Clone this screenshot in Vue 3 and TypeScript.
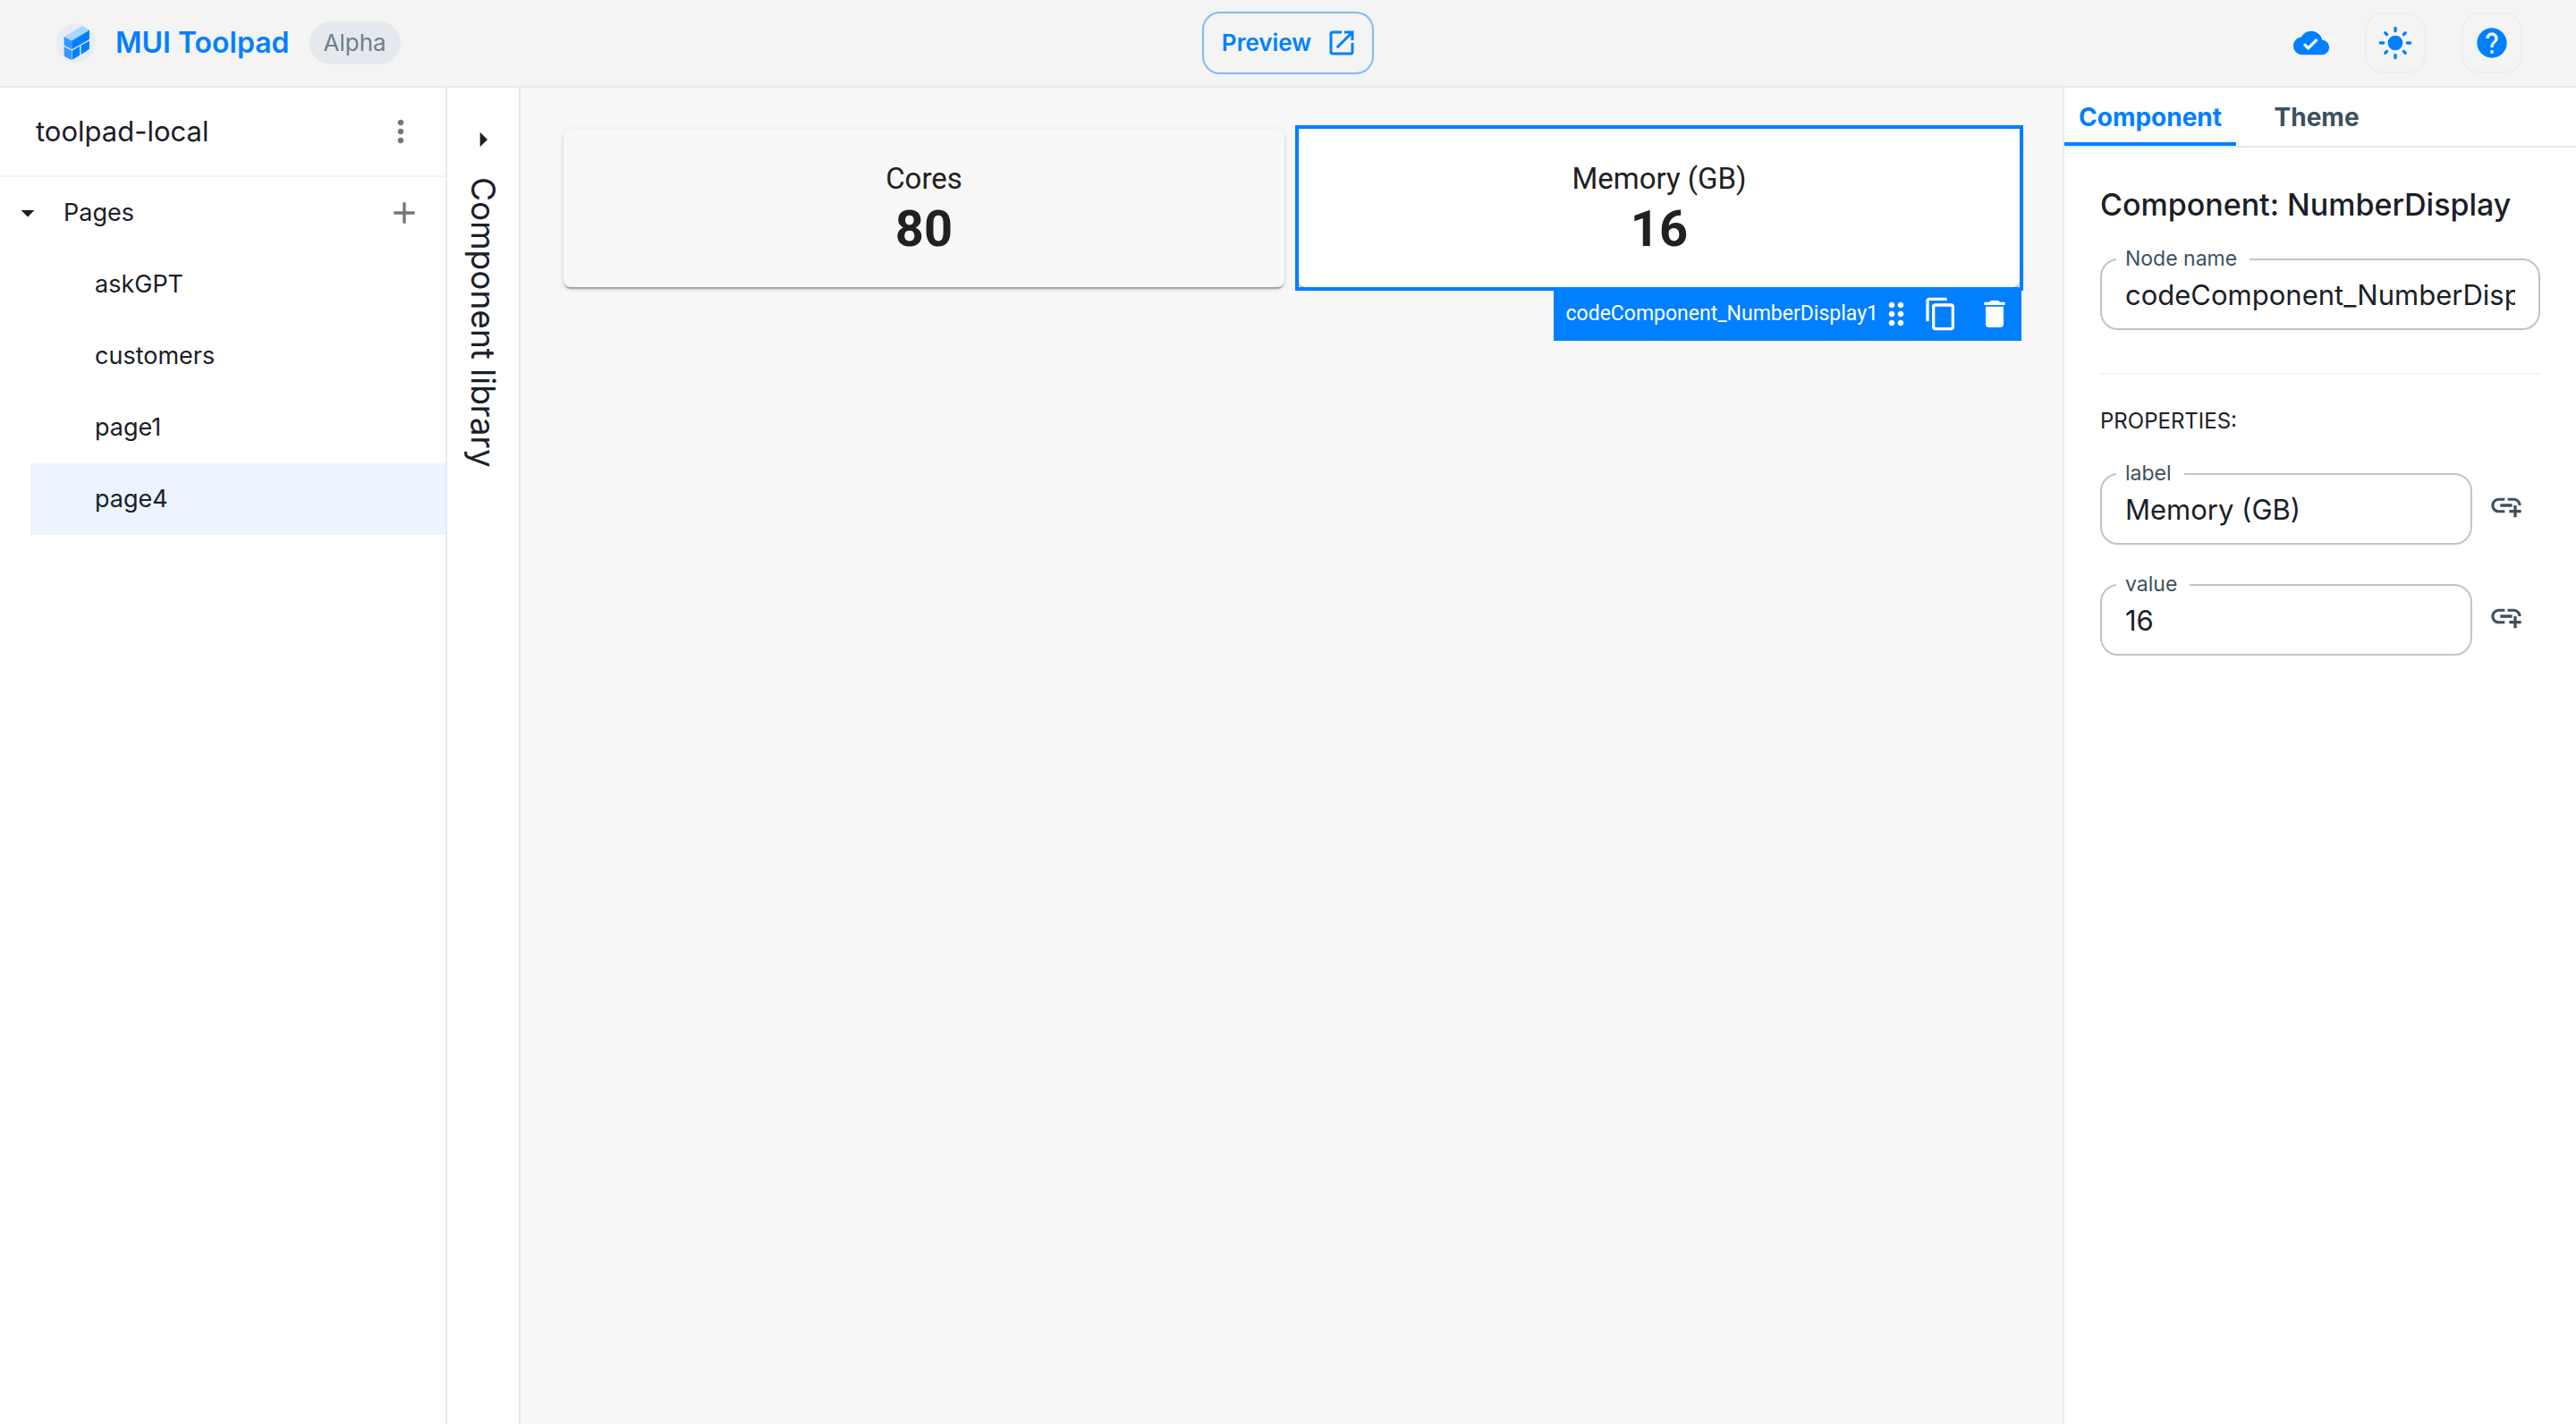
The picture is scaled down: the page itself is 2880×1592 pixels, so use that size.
<script setup lang="ts">
import { ref } from 'vue'

interface DisplayCard {
  label: string
  value: string
  node: string
}

interface Property {
  name: string
  value: string
}

const pages: string[] = ['askGPT', 'customers', 'page1', 'page4']
const currentPage = ref('page4')
const nodeName = ref('codeComponent_NumberDisplay1')
const selectedNode = 'codeComponent_NumberDisplay1'

const cards: DisplayCard[] = [
  { label: 'Cores', value: '80', node: 'codeComponent_NumberDisplay' },
  { label: 'Memory (GB)', value: '16', node: 'codeComponent_NumberDisplay1' },
]

const properties = ref<Property[]>([
  { name: 'label', value: 'Memory (GB)' },
  { name: 'value', value: '16' },
])
</script>

<template>
  <div class="app">
    <header class="topbar">
      <div class="brand">
        <svg class="logo" viewBox="0 0 44 44" aria-hidden="true">
          <circle cx="22" cy="22" r="22" fill="#E9EDF3" />
          <path fill="#A5D8FF" d="M9 15 28 3.6q1-.6 2 0L37 7.6 17.3 19.6z" />
          <path fill="#3399FF" d="M8.6 15l8.7 4.6v9.6l-7.6-3.9q-1.100-.6-1.100-1.800z" />
          <path fill="#007FFF" d="M17.3 19.600 37 7.800v9q0 1.100-1 1.700l-18.700 10.700z" />
          <path fill="#3399FF" d="M8.600 26l8.700 4.600v10.600l-7.700-4q-1-.5-1-1.600z" />
          <path fill="#007FFF" d="M17.900 30.400l8.300-4.800v10.200l-8.300 5z" />
          <path fill="#007FFF" d="M27.600 24.800 37 19.400v8.500q0 1-.9 1.600l-8.500 5.500z" />
        </svg>
        <a class="brand-name" href="#">MUI Toolpad</a>
        <span class="chip">Alpha</span>
      </div>

      <button class="preview" type="button">
        <span>Preview</span>
        <svg class="icon-md" viewBox="0 0 24 24" aria-hidden="true">
          <path d="M19 19H5V5h7V3H5c-1.110 0-2 .9-2 2v14c0 1.100.89 2 2 2h14c1.100 0 2-.9 2-2v-7h-2v7zM14 3v2h3.590l-9.830 9.830 1.410 1.410L19 6.410V10h2V3h-7z" />
        </svg>
      </button>

      <div class="actions">
        <svg class="icon" viewBox="0 0 24 24" role="img" aria-label="All changes saved">
          <path d="M19.350 10.040C18.670 6.590 15.640 4 12 4 9.110 4 6.600 5.640 5.350 8.040 2.340 8.360 0 10.910 0 14c0 3.310 2.690 6 6 6h13c2.760 0 5-2.240 5-5 0-2.640-2.050-4.780-4.650-4.960zM10 17l-3.500-3.500 1.410-1.410L10 14.170 15.180 9l1.410 1.410L10 17z" />
        </svg>
        <button class="square" type="button" aria-label="Toggle theme">
          <svg class="icon" viewBox="0 0 24 24" aria-hidden="true">
            <circle cx="12" cy="12" r="5" />
            <path class="rays" d="M12 2v2M12 20v2M2 12h2M20 12h2M5.280 5.280l1.070 1.070M17.650 17.650l1.070 1.070M5.280 18.720l1.070-1.070M17.650 6.350l1.070-1.070" />
          </svg>
        </button>
        <button class="square" type="button" aria-label="Help">
          <svg class="icon" viewBox="0 0 24 24" aria-hidden="true">
            <path d="M12 2C6.480 2 2 6.480 2 12s4.480 10 10 10 10-4.480 10-10S17.520 2 12 2zm1 17h-2v-2h2v2zm2.070-7.750l-.9.920C13.450 12.900 13 13.500 13 15h-2v-.5c0-1.100.45-2.100 1.170-2.830l1.240-1.260c.37-.36.590-.86.590-1.410 0-1.100-.9-2-2-2s-2 .9-2 2H8c0-2.210 1.790-4 4-4s4 1.790 4 4c0 .88-.36 1.680-.93 2.250z" />
          </svg>
        </button>
      </div>
    </header>

    <div class="workspace">
      <nav class="explorer" aria-label="App explorer">
        <div class="app-row">
          <span class="app-name">toolpad-local</span>
          <button class="ghost" type="button" aria-label="App menu">
            <svg class="icon" viewBox="0 0 24 24" aria-hidden="true">
              <path d="M12 8c1.100 0 2-.9 2-2s-.9-2-2-2-2 .9-2 2 .9 2 2 2zm0 2c-1.100 0-2 .9-2 2s.9 2 2 2 2-.9 2-2-.9-2-2-2zm0 6c-1.100 0-2 .9-2 2s.9 2 2 2 2-.9 2-2-.9-2-2-2z" />
            </svg>
          </button>
        </div>
        <div class="group-row">
          <button class="group-toggle" type="button" aria-expanded="true">
            <svg class="icon-md" viewBox="0 0 24 24" aria-hidden="true"><path d="m7 10 5 5 5-5z" /></svg>
            <span>Pages</span>
          </button>
          <button class="ghost" type="button" aria-label="Create page">
            <svg class="icon" viewBox="0 0 24 24" aria-hidden="true"><path d="M19 13h-6v6h-2v-6H5v-2h6V5h2v6h6v2z" /></svg>
          </button>
        </div>
        <ul class="pages">
          <li v-for="page in pages" :key="page">
            <a
              :href="'#' + page"
              :class="{ current: page === currentPage }"
              @click="currentPage = page"
            >{{ page }}</a>
          </li>
        </ul>
      </nav>

      <aside class="library">
        <button class="library-toggle" type="button" aria-label="Open component library">
          <svg class="icon" viewBox="0 0 24 24" aria-hidden="true"><path d="m10 17 5-5-5-5z" /></svg>
        </button>
        <span class="library-title">Component library</span>
      </aside>

      <main class="canvas">
        <article
          v-for="card in cards"
          :key="card.node"
          class="card"
          :class="{ selected: card.node === selectedNode }"
        >
          <p class="card-label">{{ card.label }}</p>
          <p class="card-value">{{ card.value }}</p>
          <div v-if="card.node === selectedNode" class="node-bar">
            <span>{{ card.node }}</span>
            <svg class="icon" viewBox="0 0 24 24" aria-hidden="true">
              <path d="M11 18c0 1.100-.9 2-2 2s-2-.9-2-2 .9-2 2-2 2 .9 2 2zm-2-8c-1.100 0-2 .9-2 2s.9 2 2 2 2-.9 2-2-.9-2-2-2zm0-6c-1.100 0-2 .9-2 2s.9 2 2 2 2-.9 2-2-.9-2-2-2zm6 4c1.100 0 2-.9 2-2s-.9-2-2-2-2 .9-2 2 .9 2 2 2zm0 2c-1.100 0-2 .9-2 2s.9 2 2 2 2-.9 2-2-.9-2-2-2zm0 6c-1.100 0-2 .9-2 2s.9 2 2 2 2-.9 2-2-.9-2-2-2z" />
            </svg>
            <button type="button" aria-label="Duplicate">
              <svg class="icon" viewBox="0 0 24 24" aria-hidden="true">
                <path d="M16 1H4c-1.100 0-2 .9-2 2v14h2V3h12V1zm3 4H8c-1.100 0-2 .9-2 2v14c0 1.100.9 2 2 2h11c1.100 0 2-.9 2-2V7c0-1.100-.9-2-2-2zm0 16H8V7h11v14z" />
              </svg>
            </button>
            <button type="button" aria-label="Delete">
              <svg class="icon" viewBox="0 0 24 24" aria-hidden="true">
                <path d="M6 19c0 1.100.9 2 2 2h8c1.100 0 2-.9 2-2V7H6v12zM19 4h-3.500l-1-1h-5l-1 1H5v2h14V4z" />
              </svg>
            </button>
          </div>
        </article>
      </main>

      <aside class="inspector">
        <div class="tabs" role="tablist">
          <button class="tab active" type="button" role="tab" aria-selected="true">Component</button>
          <button class="tab" type="button" role="tab" aria-selected="false">Theme</button>
        </div>
        <div class="panel" role="tabpanel">
          <h2 class="panel-title">Component: NumberDisplay</h2>
          <div class="field">
            <label for="node-name">Node name</label>
            <input id="node-name" v-model="nodeName" type="text" />
          </div>
          <hr class="rule" />
          <h3 class="overline">PROPERTIES:</h3>
          <div v-for="prop in properties" :key="prop.name" class="prop">
            <div class="field">
              <label :for="'prop-' + prop.name">{{ prop.name }}</label>
              <input :id="'prop-' + prop.name" v-model="prop.value" type="text" />
            </div>
            <button class="bind" type="button" :aria-label="'Bind ' + prop.name">
              <svg class="icon" viewBox="0 0 24 24" aria-hidden="true">
                <path d="M8 11h8v2H8v-2zm12.100 1H22c0-2.760-2.240-5-5-5h-4v1.900h4c1.710 0 3.100 1.390 3.100 3.100zM3.900 12c0-1.710 1.390-3.100 3.100-3.100h4V7H7c-2.760 0-5 2.240-5 5s2.240 5 5 5h4v-1.900H7c-1.710 0-3.100-1.390-3.100-3.100zM19 12h-2v3h-3v2h3v3h2v-3h3v-2h-3v-3z" />
              </svg>
            </button>
          </div>
        </div>
      </aside>
    </div>
  </div>
</template>

<style>
body {
  margin: 0;
}
</style>

<style scoped>
.app {
  display: flex;
  flex-direction: column;
  min-height: 100vh;
  background: #f7f7f7;
  color: #1a2027;
  font-family: Inter, 'Liberation Sans', sans-serif;
  font-size: 27px;
  line-height: 40px;
}

*,
*::before,
*::after {
  box-sizing: border-box;
}

button {
  display: flex;
  align-items: center;
  justify-content: center;
  padding: 0;
  border: 0;
  background: none;
  color: inherit;
  font: inherit;
  cursor: pointer;
}

a {
  color: inherit;
  text-decoration: none;
}

.icon,
.icon-md {
  display: block;
  flex: none;
  width: 40px;
  height: 40px;
  fill: currentColor;
}

.icon-md {
  width: 36px;
  height: 36px;
}

.rays {
  fill: none;
  stroke: currentColor;
  stroke-width: 2;
  stroke-linecap: round;
}

/* Top bar */
.topbar {
  display: grid;
  grid-template-columns: 1fr auto 1fr;
  align-items: center;
  height: 98px;
  padding: 0 60px;
  border-bottom: 2px solid #e5eaef;
  background: #f4f4f4;
  color: #007fff;
}

.brand {
  display: flex;
  align-items: center;
  padding-left: 3px;
}

.logo {
  width: 44px;
  height: 44px;
}

.brand-name {
  margin: 0 22px;
  font-size: 32px;
  font-weight: 600;
}

.chip {
  padding: 0 16px;
  border-radius: 24px;
  background: #e5e9ee;
  color: #6f7e8c;
  font-size: 26px;
  line-height: 48px;
}

.preview {
  gap: 16px;
  height: 70px;
  padding: 0 16px 0 20px;
  border: 2px solid #84b9fa;
  border-radius: 20px;
  font-size: 26px;
  font-weight: 600;
}

.actions {
  display: flex;
  align-items: center;
  justify-content: flex-end;
  gap: 40px;
}

.square {
  width: 68px;
  height: 68px;
  border: 2px solid #eeeeee;
  border-radius: 20px;
}

/* Main columns */
.workspace {
  display: flex;
  flex: 1;
}

.explorer {
  flex: none;
  width: 500px;
  border-right: 2px solid #e5eaef;
  background: #ffffff;
}

.app-row {
  display: flex;
  align-items: center;
  justify-content: space-between;
  height: 100px;
  padding: 0 20px 0 40px;
  border-bottom: 2px solid #f3f4f5;
}

.app-name {
  font-size: 31px;
}

.ghost {
  width: 60px;
  height: 60px;
  color: #757575;
}

.group-row {
  display: flex;
  align-items: center;
  justify-content: space-between;
  height: 80px;
  padding: 0 16px 0 13px;
}

.group-toggle {
  gap: 22px;
}

.pages {
  margin: 0 0 0 34px;
  padding: 0;
  list-style: none;
}

.pages a {
  display: block;
  padding: 20px 72px;
}

.pages a.current {
  background: #ebf4ff;
}

.library {
  display: flex;
  flex: none;
  flex-direction: column;
  align-items: center;
  width: 82px;
  padding-top: 28px;
  border-right: 2px solid #e5eaef;
  background: #ffffff;
}

.library-toggle {
  width: 60px;
  height: 60px;
}

.library-title {
  margin-top: 12px;
  font-size: 37px;
  line-height: 48px;
  writing-mode: vertical-rl;
}

/* Page canvas */
.canvas {
  display: grid;
  flex: 1;
  grid-template-columns: 1fr 1fr;
  align-content: start;
  gap: 16px;
  min-width: 0;
  padding: 46px 48px;
  color: #212121;
  font-family: Roboto, 'Liberation Sans', sans-serif;
}

.card {
  position: relative;
  padding: 32px;
  border-radius: 8px;
  box-shadow:
    0 4px 2px -2px rgba(0, 0, 0, 0.2),
    0 2px 2px 0 rgba(0, 0, 0, 0.14),
    0 2px 6px 0 rgba(0, 0, 0, 0.12);
  background: #f7f7f7;
  text-align: center;
}

.card.selected {
  background: #ffffff;
}

.card.selected::after {
  position: absolute;
  inset: -4px;
  border: 4px solid #007fff;
  content: '';
  pointer-events: none;
}

.card-label {
  margin: 0;
  font-size: 33px;
  line-height: 48px;
}

.card-value {
  margin: 0;
  font-size: 56px;
  font-weight: 700;
  line-height: 65px;
}

.node-bar {
  position: absolute;
  top: 100%;
  right: -2px;
  z-index: 1;
  display: flex;
  align-items: center;
  height: 60px;
  padding-left: 14px;
  background: #007fff;
  color: #ffffff;
  font-size: 23px;
}

.node-bar button {
  width: 60px;
  height: 60px;
}

/* Inspector */
.inspector {
  flex: none;
  width: 574px;
  border-left: 2px solid #e5eaef;
  background: #ffffff;
}

.tabs {
  display: flex;
  height: 67px;
  border-bottom: 2px solid #e5eaef;
}

.tab {
  min-width: 180px;
  padding: 0 16px;
  color: #3e5060;
  font-size: 28px;
  font-weight: 700;
}

.tab.active {
  box-shadow: inset 0 -4px #007fff;
  color: #007fff;
}

.panel {
  padding: 40px;
}

.panel-title {
  margin: 0 0 36px;
  font-size: 34px;
  font-weight: 500;
  line-height: 48px;
  white-space: nowrap;
}

.field {
  position: relative;
  flex: 1;
  min-width: 0;
}

.field label {
  position: absolute;
  top: -16px;
  left: 18px;
  padding: 0 14px 0 10px;
  background: #ffffff;
  color: #3e5060;
  font-size: 23px;
  line-height: 32px;
}

.field input {
  display: block;
  width: 100%;
  height: 80px;
  padding: 0 26px;
  border: 2px solid #c4c4c4;
  border-radius: 20px;
  outline: 0;
  background: none;
  color: inherit;
  font: inherit;
  font-size: 31px;
}

.rule {
  height: 2px;
  margin: 48px 0 32px;
  border: 0;
  background: #f3f4f5;
}

.overline {
  margin: 0 0 38px;
  font-size: 24px;
  font-weight: 400;
}

.prop {
  display: flex;
  align-items: flex-start;
  margin-bottom: 44px;
}

.bind {
  width: 60px;
  height: 72px;
  margin: 0 8px;
  color: #3e5060;
}
</style>
